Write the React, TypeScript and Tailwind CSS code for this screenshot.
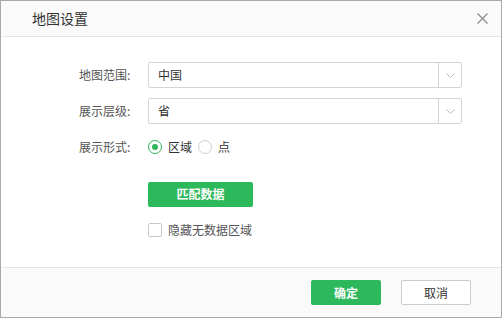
import { useState } from 'react';

const font = { fontFamily: '"Noto Sans CJK SC", "Liberation Sans", sans-serif' };

function Select({ value }: { value: string }) {
  return (
    <div className="flex h-[26px] w-[314px] border border-[#d4d4d4] bg-white rounded-[2px]">
      <div className="flex-1 flex items-center pl-[9px] text-[12px] text-[#333]">{value}</div>
      <div className="w-[23px] border-l border-[#d4d4d4] flex items-center justify-center">
        <svg width="9" height="5" viewBox="0 0 9 5" fill="none">
          <path d="M0.5 0.5 L4.5 4.5 L8.5 0.5" stroke="#b8b8b8" strokeWidth="1" />
        </svg>
      </div>
    </div>
  );
}

function Radio({ checked, label, onClick }: { checked: boolean; label: string; onClick: () => void }) {
  return (
    <button onClick={onClick} className="flex items-center gap-[6px] text-[12px] text-[#333]">
      <span
        className={`w-[14px] h-[14px] rounded-full border flex items-center justify-center bg-white ${
          checked ? 'border-[#2eb85c]' : 'border-[#cfcfcf]'
        }`}
      >
        {checked && <span className="w-[6px] h-[6px] rounded-full bg-[#2eb85c]" />}
      </span>
      {label}
    </button>
  );
}

export default function App() {
  const [mode, setMode] = useState('area');
  const [hideEmpty, setHideEmpty] = useState(false);

  return (
    <div style={font} className="w-[502px] h-[318px] flex flex-col border border-[#a9a9a9] bg-white">
      {/* Header */}
      <div className="h-[36px] shrink-0 bg-[#fafafa] border-b border-[#e6e6e6] flex items-center justify-between pl-[31px] pr-[13px]">
        <span className="text-[14px] text-[#333]">地图设置</span>
        <svg width="11" height="11" viewBox="0 0 11 11">
          <path d="M0.5 0.5 L10.5 10.5 M10.5 0.5 L0.5 10.5" stroke="#8a8a8a" strokeWidth="1.2" />
        </svg>
      </div>

      {/* Body */}
      <div className="flex-1 pl-[78px] pt-[25px]">
        <div className="flex items-center h-[26px]">
          <span className="w-[69px] text-[12px] text-[#555]">地图范围:</span>
          <Select value="中国" />
        </div>
        <div className="flex items-center h-[26px] mt-[10px]">
          <span className="w-[69px] text-[12px] text-[#555]">展示层级:</span>
          <Select value="省" />
        </div>
        <div className="flex items-center h-[26px] mt-[10px]">
          <span className="w-[69px] text-[12px] text-[#555]">展示形式:</span>
          <div className="flex items-center gap-[6px]">
            <Radio checked={mode === 'area'} label="区域" onClick={() => setMode('area')} />
            <Radio checked={mode === 'point'} label="点" onClick={() => setMode('point')} />
          </div>
        </div>
        <div className="pl-[69px] mt-[20px]">
          <button className="w-[105px] h-[25px] rounded-[2px] bg-[#2eb85c] text-white text-[12px] font-bold">
            匹配数据
          </button>
          <button
            onClick={() => setHideEmpty(!hideEmpty)}
            className="flex items-center gap-[6px] mt-[14px] text-[12px] text-[#555]"
          >
            <span
              className={`w-[14px] h-[14px] border rounded-[2px] ${
                hideEmpty ? 'bg-[#2eb85c] border-[#2eb85c]' : 'bg-white border-[#c8c8c8]'
              }`}
            />
            隐藏无数据区域
          </button>
        </div>
      </div>

      {/* Footer */}
      <div className="h-[50px] shrink-0 bg-[#fafafa] border-t border-[#e6e6e6] flex items-center justify-end gap-[20px] pr-[30px]">
        <button className="w-[70px] h-[25px] rounded-[2px] bg-[#2eb85c] text-white text-[12px] font-bold">确定</button>
        <button className="w-[70px] h-[25px] rounded-[2px] bg-white border border-[#cccccc] text-[#333] text-[12px]">
          取消
        </button>
      </div>
    </div>
  );
}
